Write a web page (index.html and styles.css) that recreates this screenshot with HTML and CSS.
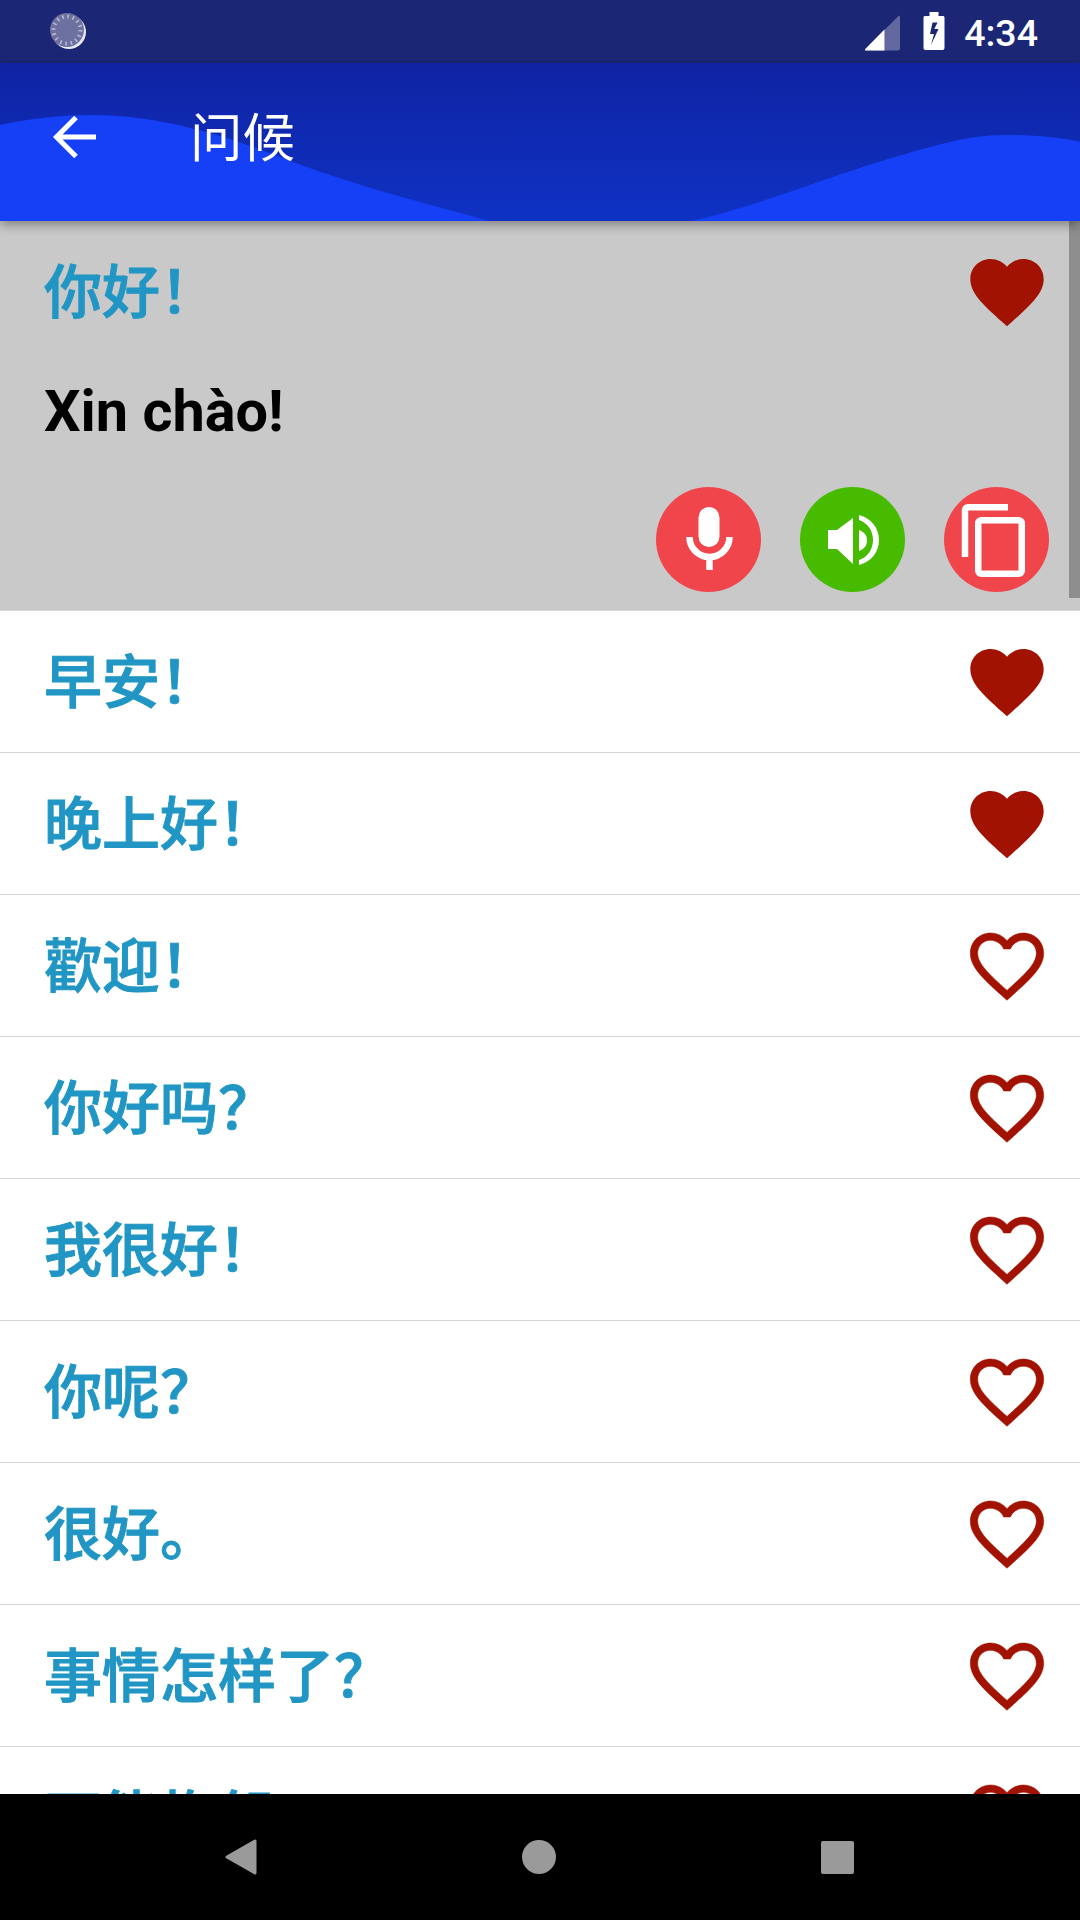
FILE: index.html

```html
<!DOCTYPE html>
<html lang="zh">
<head>
  <meta charset="UTF-8">
  <meta name="viewport" content="width=device-width, initial-scale=1.0">
  <title>问候</title>
  <link rel="stylesheet" href="styles.css">
</head>
<body>
  <svg class="defs" width="0" height="0">
    <symbol id="heart" viewBox="0 0 24 24">
      <path d="M12 21.35l-1.45-1.32C5.4 15.36 2 12.28 2 8.5 2 5.42 4.42 3 7.5 3c1.74 0 3.41.81 4.5 2.09C13.09 3.81 14.76 3 16.5 3 19.58 3 22 5.42 22 8.5c0 3.78-3.4 6.86-8.55 11.54L12 21.35z"/>
    </symbol>
    <symbol id="heart-line" viewBox="0 0 24 24">
      <path stroke="#a21200" stroke-width="0.15" d="M16.5 3c-1.74 0-3.41.81-4.5 2.09C10.91 3.81 9.24 3 7.5 3 4.42 3 2 5.42 2 8.5c0 3.78 3.4 6.86 8.55 11.54L12 21.35l1.45-1.32C18.6 15.36 22 12.28 22 8.5 22 5.42 19.58 3 16.5 3zm-4.4 15.55l-.1.1-.1-.1C7.14 14.24 4 11.39 4 8.5 4 6.5 5.5 5 7.5 5c1.54 0 3.04.99 3.57 2.36h1.87C13.46 5.99 14.96 5 16.5 5c2 0 3.5 1.5 3.5 3.5 0 2.89-3.14 5.74-7.9 10.05z"/>
    </symbol>
  </svg>

  <div class="phone">
    <div class="status-bar">
      <svg class="loader" width="38" height="38" viewBox="0 0 38 38">
        <circle cx="20" cy="20" r="17" fill="#fff" opacity="0.9"/>
        <circle cx="18" cy="18" r="17" fill="#6d719f"/>
        <circle cx="18" cy="18" r="13.5" fill="none" stroke="#b6b8cf" stroke-width="4" stroke-dasharray="1.6 3.7"/>
      </svg>
      <div class="status-right">
        <svg class="signal" width="35" height="36" viewBox="0 0 36 36">
          <path d="M34.5 0.5c.8-.6 1.5-.2 1.5.8V34c0 1-.6 2-2 2H1c-1 0-1.400-.9-.7-1.600z" fill="#6468a0"/>
          <path d="M20 14.500V36H1c-1 0-1.400-.9-.7-1.600z" fill="#fff"/>
        </svg>
        <svg class="battery" width="22" height="38" viewBox="0 0 21 38">
          <path fill-rule="evenodd" fill="#fff" d="M6 0h9v4h4.500c.8 0 1.500.7 1.500 1.500V36c0 1-.8 2-2 2H2c-1.200 0-2-1-2-2V5.500C0 4.700.7 4 1.500 4H6zM9 10.500 6.500 22H10.500L7.500 33 15 17H10.800L14 10.500z"/>
        </svg>
        <span class="clock">4:34</span>
      </div>
    </div>

    <header class="app-bar">
      <svg class="wave" width="1080" height="158" viewBox="0 0 1080 158" preserveAspectRatio="none">
        <path d="M0 62C32 55 62 52 93 52C165 52 235 76 293 99C360 124 425 140 489 158H692C760 142 825 115 885 97C930 84 965 72 1005 72C1035 72 1058 74 1080 79V158H0Z" fill="#1540f5"/>
      </svg>
      <svg class="back" width="48" height="44" viewBox="0 0 48 44">
        <path d="M44 22H5M24 2.500 4.500 22 24 41.500" fill="none" stroke="#fff" stroke-width="5"/>
      </svg>
      <h1 class="title">问候</h1>
    </header>

    <main class="list">
      <section class="item-open">
        <div class="item-top">
          <span class="phrase">你好&#xFF01;</span>
          <svg class="heart"><use href="#heart"/></svg>
        </div>
        <p class="translation">Xin chào!</p>
        <div class="actions">
          <button class="round red">
            <svg width="60" height="72" viewBox="0 0 60 72">
              <rect x="19.500" y="3" width="21" height="40" rx="10.500" fill="#fff"/>
              <path d="M10.500 33a20 20 0 0 0 40 0M30.500 53V66" fill="none" stroke="#fff" stroke-width="6.500"/>
            </svg>
          </button>
          <button class="round green">
            <svg width="60" height="60" viewBox="0 0 60 60">
              <path d="M5 20H14L30 8V54L14 39H5z" fill="#fff"/>
              <path fill="#fff" d="M36 5C48 8 56 18 56 30S48 52 36 55V50C45 47 50 39 50 30S45 13 36 10z"/>
              <path fill="#fff" d="M36 20C41 22 44 25 44 30.500S41 39 36 41z"/>
            </svg>
          </button>
          <button class="round red">
            <svg width="80" height="80" viewBox="0 0 80 80">
              <path d="M51 7.250H11a3 3 0 0 0-3 3V57" fill="none" stroke="#fff" stroke-width="6.500"/>
              <rect x="21.250" y="20.250" width="43.500" height="53.500" rx="3" fill="none" stroke="#fff" stroke-width="6.500"/>
            </svg>
          </button>
        </div>
        <div class="scroll-thumb"></div>
      </section>

      <div class="item"><span class="phrase">早安&#xFF01;</span><svg class="heart"><use href="#heart"/></svg></div>
      <div class="item"><span class="phrase">晚上好&#xFF01;</span><svg class="heart"><use href="#heart"/></svg></div>
      <div class="item"><span class="phrase">歡迎&#xFF01;</span><svg class="heart"><use href="#heart-line"/></svg></div>
      <div class="item"><span class="phrase">你好吗&#xFF1F;</span><svg class="heart"><use href="#heart-line"/></svg></div>
      <div class="item"><span class="phrase">我很好&#xFF01;</span><svg class="heart"><use href="#heart-line"/></svg></div>
      <div class="item"><span class="phrase">你呢&#xFF1F;</span><svg class="heart"><use href="#heart-line"/></svg></div>
      <div class="item"><span class="phrase">很好。</span><svg class="heart"><use href="#heart-line"/></svg></div>
      <div class="item"><span class="phrase">事情怎样了&#xFF1F;</span><svg class="heart"><use href="#heart-line"/></svg></div>
      <div class="item"><span class="phrase">不能抱怨&#xFF01;</span><svg class="heart"><use href="#heart-line"/></svg></div>
    </main>

    <nav class="nav-bar">
      <svg width="32" height="36" viewBox="0 0 32 36"><path d="M30 2V34L2 18z" fill="#9a9a9a" stroke="#9a9a9a" stroke-width="3" stroke-linejoin="round"/></svg>
      <svg width="34" height="34" viewBox="0 0 34 34"><circle cx="17" cy="17" r="17" fill="#9a9a9a"/></svg>
      <svg width="33" height="33" viewBox="0 0 33 33"><rect width="33" height="33" rx="2" fill="#9a9a9a"/></svg>
    </nav>
  </div>
</body>
</html>
```

FILE: styles.css

```css
* {
  box-sizing: border-box;
}

body {
  margin: 0;
  background: #fff;
  font-family: Roboto, "Noto Sans CJK SC", sans-serif;
}

.defs {
  position: absolute;
}

.phone {
  width: 1080px;
  height: 1920px;
  display: flex;
  flex-direction: column;
  overflow: hidden;
}

.status-bar {
  height: 63px;
  flex-shrink: 0;
  background: #1b2675;
  display: flex;
  justify-content: space-between;
  align-items: flex-start;
  padding: 12px 42px 0 49px;
}

.status-right {
  display: flex;
  align-items: flex-start;
  color: #fff;
}

.signal {
  margin-top: 3px;
}

.battery {
  margin: 0 0 0 23px;
}

.clock {
  margin-left: 19px;
  font-size: 37.5px;
  font-weight: 500;
  line-height: 42px;
}

.app-bar {
  position: relative;
  height: 158px;
  flex-shrink: 0;
  background: linear-gradient(to bottom, #0f23a3, #0f32c4);
  display: flex;
  align-items: center;
  padding: 0 0 11px 52px;
  box-shadow: 0 4px 10px rgba(0, 0, 0, 0.35);
  z-index: 2;
}

.wave {
  position: absolute;
  left: 0;
  top: 0;
}

.back {
  position: relative;
  flex-shrink: 0;
}

.title {
  position: relative;
  margin: 4px 0 0 90px;
  color: #fff;
  font-size: 52.5px;
  font-weight: 400;
  line-height: 70px;
}

.list {
  flex: 1;
  min-height: 0;
  overflow: hidden;
}

.phrase {
  color: #2196c4;
  font-family: "Noto Sans CJK SC", sans-serif;
  font-size: 58px;
  font-weight: 500;
  line-height: 80px;
  -webkit-text-stroke: 1px #2196c4;
  margin-top: -8px;
}

.heart {
  width: 88px;
  height: 88px;
  fill: #a21200;
  flex-shrink: 0;
}

.item-open {
  position: relative;
  height: 390px;
  background: #c9c9c9;
  padding: 0 29px 0 44px;
  border-bottom: 1px solid #d6d6d6;
}

.item-top {
  height: 142px;
  display: flex;
  justify-content: space-between;
  align-items: center;
}

.translation {
  margin: 0;
  padding-top: 9px;
  font-size: 57.6px;
  font-weight: 700;
  line-height: 80px;
  color: #000;
}

.actions {
  position: absolute;
  right: 31px;
  bottom: 18px;
  display: flex;
  gap: 39px;
}

.round {
  width: 105px;
  height: 105px;
  padding: 0;
  border: none;
  border-radius: 50%;
  display: flex;
  align-items: center;
  justify-content: center;
}

.red {
  background: #f1454c;
}

.green {
  background: #47bb00;
}

.scroll-thumb {
  position: absolute;
  top: 0;
  right: 0;
  width: 11px;
  height: 377px;
  background: #8e8e8e;
}

.item {
  height: 142px;
  display: flex;
  justify-content: space-between;
  align-items: center;
  padding: 0 29px 0 44px;
  border-bottom: 1px solid #d6d6d6;
  background: #fff;
}

.nav-bar {
  height: 126px;
  flex-shrink: 0;
  background: #000;
  display: flex;
  align-items: center;
  position: relative;
  padding-left: 225px;
  gap: 265px;
}
```
